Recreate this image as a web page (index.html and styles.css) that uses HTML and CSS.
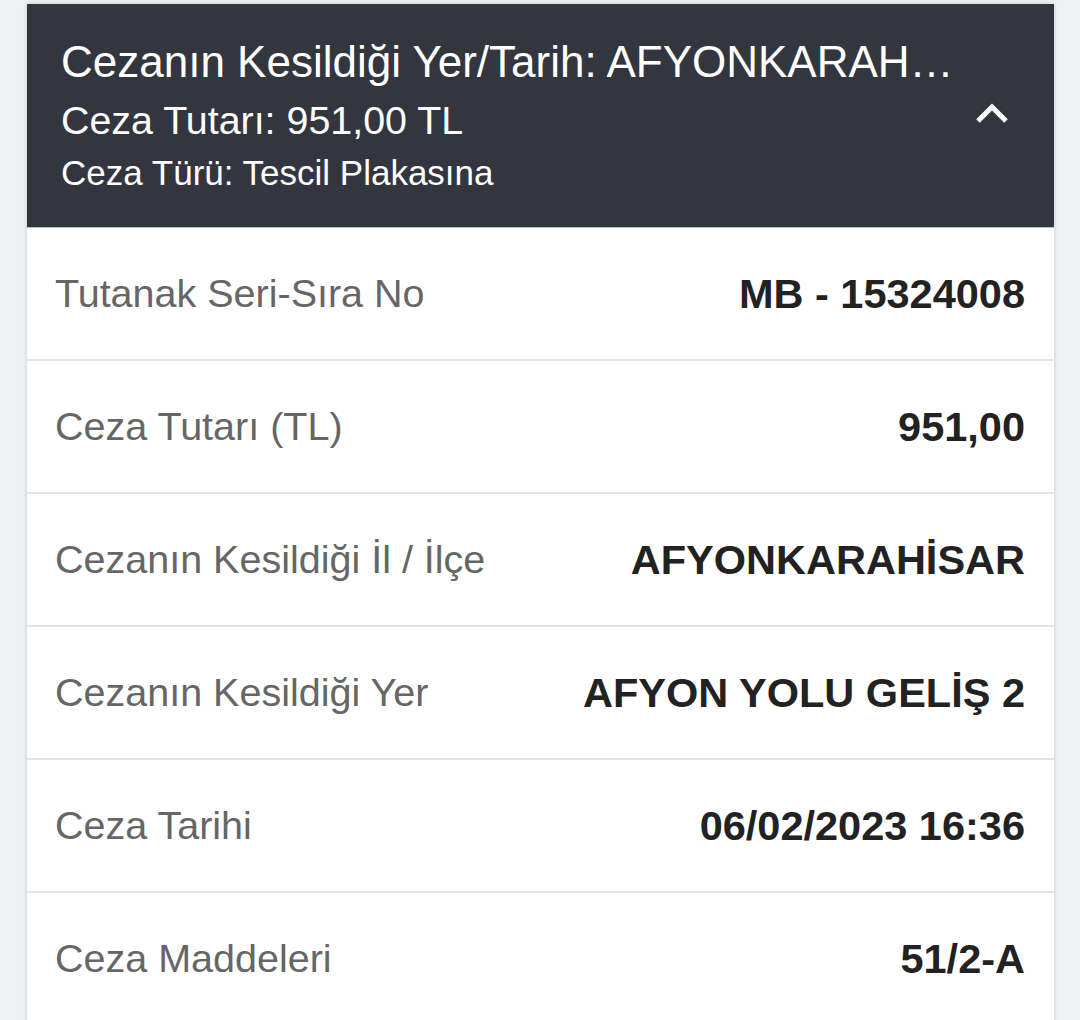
FILE: index.html
```html
<!DOCTYPE html>
<html lang="tr">
<head>
  <meta charset="UTF-8" />
  <meta name="viewport" content="width=device-width, initial-scale=1.0"/>
  <title>Ceza Detayı</title>
  <link rel="stylesheet" href="styles.css">
</head>
<body>

<div class="card">
  <div class="card-head">
    <div class="head-text">
      <div class="head-title">Cezanın Kesildiği Yer/Tarih: AFYONKARAH…</div>
      <div class="head-amount">Ceza Tutarı: 951,00 TL</div>
      <div class="head-type">Ceza Türü: Tescil Plakasına</div>
    </div>
    <svg class="chevron" width="34" height="24" viewBox="0 0 34 24">
      <polyline points="3,20 17,6 31,20" fill="none" stroke="#fff" stroke-width="5"/>
    </svg>
  </div>

  <div class="row">
    <span class="label">Tutanak Seri-Sıra No</span>
    <span class="value">MB - 15324008</span>
  </div>
  <div class="row">
    <span class="label">Ceza Tutarı (TL)</span>
    <span class="value">951,00</span>
  </div>
  <div class="row">
    <span class="label">Cezanın Kesildiği İl / İlçe</span>
    <span class="value">AFYONKARAHİSAR</span>
  </div>
  <div class="row">
    <span class="label">Cezanın Kesildiği Yer</span>
    <span class="value">AFYON YOLU GELİŞ 2</span>
  </div>
  <div class="row">
    <span class="label">Ceza Tarihi</span>
    <span class="value">06/02/2023 16:36</span>
  </div>
  <div class="row">
    <span class="label">Ceza Maddeleri</span>
    <span class="value">51/2-A</span>
  </div>
</div>

</body>
</html>
```

FILE: styles.css
```css
body {
  margin: 0;
  padding: 4px 26px 0 27px;
  font-family: "Liberation Sans", Arial, sans-serif;
  background: #eef0f3;
  overflow: hidden;
}

.card {
  background: white;
  box-shadow: 0 0 4px rgba(0, 0, 0, 0.18);
}

.card-head {
  display: flex;
  align-items: center;
  background: #33363e;
  color: white;
  padding: 28px 45px 29px 34px;
  border-bottom: 1px solid #b9bbc0;
}

.head-text {
  flex: 1;
  min-width: 0;
  white-space: nowrap;
}

.head-title {
  font-size: 44px;
  line-height: 60px;
}

.head-amount {
  font-size: 39.4px;
  line-height: 56px;
}

.head-type {
  font-size: 35px;
  line-height: 50px;
}

.chevron {
  display: block;
  margin-bottom: 4px;
}

.row {
  display: flex;
  align-items: center;
  justify-content: space-between;
  height: 131px;
  padding: 0 29px 0 28px;
  border-bottom: 2px solid #e4e4e4;
}

.label {
  font-size: 39.5px;
  color: #666;
}

.value {
  font-size: 41.5px;
  font-weight: bold;
  color: #222;
}
```
